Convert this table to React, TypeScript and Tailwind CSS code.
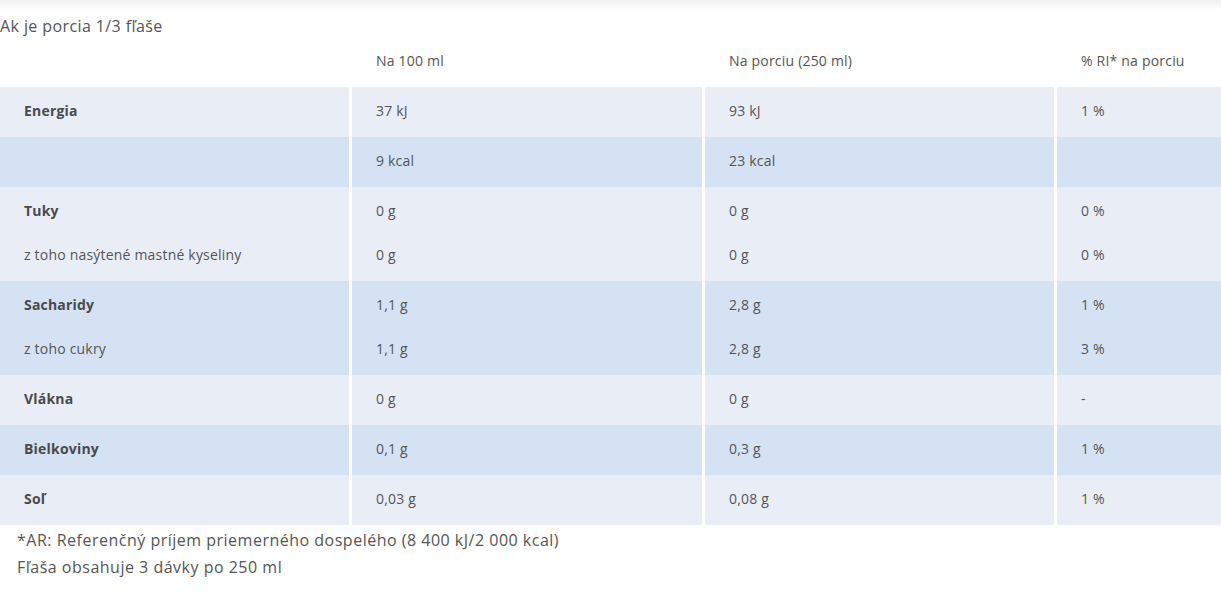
type Row = { label: string[]; bold: boolean[]; a: string[]; b: string[]; c: string[]; tone: "light" | "blue" };

const ROWS: Row[] = [
  { label: ["Energia"], bold: [true], a: ["37 kJ"], b: ["93 kJ"], c: ["1 %"], tone: "light" },
  { label: [""], bold: [false], a: ["9 kcal"], b: ["23 kcal"], c: [""], tone: "blue" },
  {
    label: ["Tuky", "z toho nasýtené mastné kyseliny"],
    bold: [true, false],
    a: ["0 g", "0 g"],
    b: ["0 g", "0 g"],
    c: ["0 %", "0 %"],
    tone: "light",
  },
  {
    label: ["Sacharidy", "z toho cukry"],
    bold: [true, false],
    a: ["1,1 g", "1,1 g"],
    b: ["2,8 g", "2,8 g"],
    c: ["1 %", "3 %"],
    tone: "blue",
  },
  { label: ["Vlákna"], bold: [true], a: ["0 g"], b: ["0 g"], c: ["-"], tone: "light" },
  { label: ["Bielkoviny"], bold: [true], a: ["0,1 g"], b: ["0,3 g"], c: ["1 %"], tone: "blue" },
  { label: ["Soľ"], bold: [true], a: ["0,03 g"], b: ["0,08 g"], c: ["1 %"], tone: "light" },
];

const GRID = "grid grid-cols-[349px_353px_352px_1fr]";

function Cell({ lines, bold, first }: { lines: string[]; bold?: boolean[]; first?: boolean }) {
  return (
    <div
      className={
        "flex flex-col gap-[24px] pt-[14px] pb-[16px] pl-[24px] " +
        (first ? "pl-[23px]" : "border-l-[3px] border-white")
      }
    >
      {lines.map((t, i) => (
        <div key={i} className={"h-[20px] leading-[20px] " + (bold?.[i] ? "font-bold text-[#4a4a4a]" : "")}>
          {t}
        </div>
      ))}
    </div>
  );
}

export default function App() {
  return (
    <div className="min-h-screen bg-white text-[14px] tracking-[0.2px] text-[#555] font-['Open_Sans','Noto_Sans',sans-serif]">
      <div className="h-[10px] bg-gradient-to-b from-[#f0f0f0] to-white" />
      <div className="pt-[4px] h-[30px] text-[16px] leading-[24px] tracking-[0.4px] text-[#555]">Ak je porcia 1/3 fľaše</div>

      <div className={GRID + " h-[47px] pt-[11px]"}>
        <div />
        <div className="pl-[27px] leading-[20px]">Na 100 ml</div>
        <div className="pl-[27px] leading-[20px]">Na porciu (250 ml)</div>
        <div className="pl-[27px] leading-[20px]">% RI* na porciu</div>
      </div>

      {ROWS.map((r, i) => (
        <div key={i} className={GRID + " " + (r.tone === "light" ? "bg-[#e9eef6]" : "bg-[#d4e2f4]")}>
          <Cell lines={r.label} bold={r.bold} first />
          <Cell lines={r.a} />
          <Cell lines={r.b} />
          <Cell lines={r.c} />
        </div>
      ))}

      <div className="pl-[17px] pt-[2px] text-[16px] leading-[27px] tracking-[0.5px]">
        <div>*AR: Referenčný príjem priemerného dospelého (8 400 kJ/2 000 kcal)</div>
        <div>Fľaša obsahuje 3 dávky po 250 ml</div>
      </div>
    </div>
  );
}
